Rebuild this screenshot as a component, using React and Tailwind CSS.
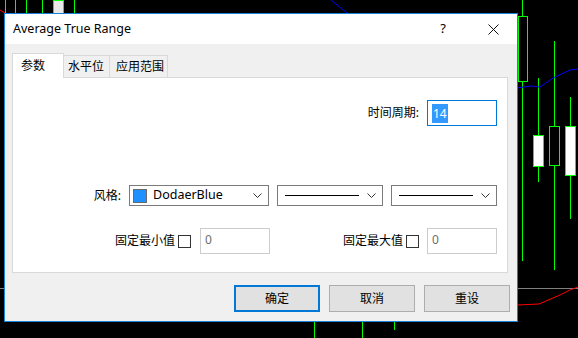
import React from "react";

const font = { fontFamily: '"Segoe UI", "Noto Sans", "Noto Sans CJK SC", sans-serif' };

function Chart() {
  return (
    <svg className="absolute inset-0" width="578" height="338" shapeRendering="crispEdges">
      {/* gray level line */}
      <line x1="0" y1="288.5" x2="578" y2="288.5" stroke="#808080" />
      {/* wicks peeking above the dialog */}
      {[5, 15, 26, 42, 74].map((x) => (
        <line key={x} x1={x + 0.5} y1="0" x2={x + 0.5} y2="14" stroke="#00ff00" />
      ))}
      <rect x="53" y="0" width="10" height="14" fill="#e8e8e8" stroke="#00ff00" />
      {/* wicks below the dialog */}
      <line x1="314.5" y1="322" x2="314.5" y2="338" stroke="#00ff00" />
      <line x1="362.5" y1="322" x2="362.5" y2="338" stroke="#00ff00" />
      <line x1="394.5" y1="322" x2="394.5" y2="330" stroke="#00ff00" />
      {/* right side candles */}
      <line x1="522.5" y1="0" x2="522.5" y2="261" stroke="#00ff00" />
      <rect x="518.5" y="16.5" width="9" height="65" fill="#000" stroke="#00ff00" />
      <line x1="538.5" y1="78" x2="538.5" y2="182" stroke="#00ff00" />
      <rect x="533.5" y="135.5" width="10" height="31" fill="#fff" stroke="#00ff00" />
      <line x1="554.5" y1="41" x2="554.5" y2="270" stroke="#00ff00" />
      <rect x="549.5" y="126.5" width="10" height="39" fill="#000" stroke="#00ff00" />
      <line x1="570.5" y1="97" x2="570.5" y2="219" stroke="#00ff00" />
      <rect x="565.5" y="126.5" width="10" height="49" fill="#fff" stroke="#00ff00" />
      {/* blue MA line */}
      <polyline
        points="331,0 347,13 355,18"
        fill="none"
        stroke="#0000ff"
        shapeRendering="auto"
      />
      <polyline
        points="517,88 531,86 540,87 553,78 570,70 578,69"
        fill="none"
        stroke="#0000ff"
        shapeRendering="auto"
      />
      {/* red ATR line */}
      <polyline points="0,10 5,13" fill="none" stroke="#ff0000" shapeRendering="auto" />
      <polyline
        points="517,305 539,304 560,295 570,290 578,287"
        fill="none"
        stroke="#ff0000"
        shapeRendering="auto"
      />
    </svg>
  );
}

function Chevron() {
  return (
    <svg width="9" height="6" viewBox="0 0 9 6" className="shrink-0">
      <path d="M0.5 0.5 L4.5 4.5 L8.5 0.5" fill="none" stroke="#333" strokeWidth="1" />
    </svg>
  );
}

function LineCombo() {
  return (
    <div className="flex h-[21px] w-[106px] items-center border border-[#7a7a7a] bg-white pl-[7px] pr-[6px]">
      <div className="h-px w-[74px] bg-black" />
      <div className="ml-auto">
        <Chevron />
      </div>
    </div>
  );
}

function Check() {
  return <div className="h-[13px] w-[13px] border border-[#333] bg-white" />;
}

function Disabled() {
  return (
    <div className="flex h-[26px] w-[70px] items-start border border-[#cccccc] bg-white pl-[4px] pt-[2px] text-[12px] text-[#6d6d6d]">
      0
    </div>
  );
}

export default function App() {
  return (
    <div className="relative h-[338px] w-[578px] overflow-hidden bg-black" style={font}>
      <Chart />
      <div className="absolute left-[4px] top-[13px] flex h-[309px] w-[514px] flex-col border border-[#1883d7] bg-[#f0f0f0] text-[12px] text-black">
        {/* title bar */}
        <div className="flex h-[30px] items-center bg-white pl-[8px]">
          <span className="text-[12.5px]">Average True Range</span>
          <span className="ml-auto mr-[42px] text-[13px]">?</span>
          <svg width="11" height="11" viewBox="0 0 11 11" className="mr-[18px]">
            <path d="M0.5 0.5 L10.5 10.5 M10.5 0.5 L0.5 10.5" stroke="#111" strokeWidth="1" />
          </svg>
        </div>

        {/* tabs */}
        <div className="ml-[7px] mt-[9px] flex items-end">
          <div className="relative z-10 -mb-px flex h-[25px] w-[52px] items-start border border-b-0 border-[#d9d9d9] bg-white pl-[8px] pt-[3px]">
            参数
          </div>
          <div className="flex h-[22px] w-[46px] items-center border border-l-0 border-b-0 border-[#d9d9d9] bg-[#f0f0f0] pl-[4px]">
            水平位
          </div>
          <div className="flex h-[22px] w-[58px] items-center border border-l-0 border-b-0 border-[#d9d9d9] bg-[#f0f0f0] pl-[6px]">
            应用范围
          </div>
        </div>

        {/* panel */}
        <div className="ml-[7px] flex h-[196px] w-[496px] flex-col border border-[#d9d9d9] bg-white pr-[10px]">
          <div className="mt-[22px] flex items-center justify-end">
            <span>时间周期:</span>
            <div className="ml-[8px] flex h-[26px] w-[70px] items-center border border-[#0078d7] pl-[4px]">
              <span className="bg-[#3399ff] px-px leading-[19px] text-white">14</span>
            </div>
          </div>

          <div className="mt-[59px] flex items-center justify-end">
            <span className="mr-[8px]">风格:</span>
            <div className="flex h-[21px] w-[140px] items-center border border-[#7a7a7a] bg-white pl-[3px] pr-[6px]">
              <div className="h-[14px] w-[14px] border border-[#6a6a6a] bg-[#1e90ff]" />
              <span className="ml-[6px] text-[12.5px]">DodaerBlue</span>
              <div className="ml-auto">
                <Chevron />
              </div>
            </div>
            <div className="ml-[8px]">
              <LineCombo />
            </div>
            <div className="ml-[8px]">
              <LineCombo />
            </div>
          </div>

          <div className="mt-[22px] flex items-center justify-end">
            <span>固定最小值</span>
            <div className="ml-[3px]">
              <Check />
            </div>
            <div className="ml-[9px]">
              <Disabled />
            </div>
            <span className="ml-[73px]">固定最大值</span>
            <div className="ml-[3px]">
              <Check />
            </div>
            <div className="ml-[8px]">
              <Disabled />
            </div>
          </div>
        </div>

        {/* buttons */}
        <div className="mt-[12px] flex justify-end gap-[9px] pr-[7px]">
          <button className="h-[27px] w-[86px] border-2 border-[#0078d7] bg-[#e1e1e1]">确定</button>
          <button className="h-[27px] w-[86px] border border-[#adadad] bg-[#e1e1e1]">取消</button>
          <button className="h-[27px] w-[86px] border border-[#adadad] bg-[#e1e1e1]">重设</button>
        </div>
      </div>
    </div>
  );
}
